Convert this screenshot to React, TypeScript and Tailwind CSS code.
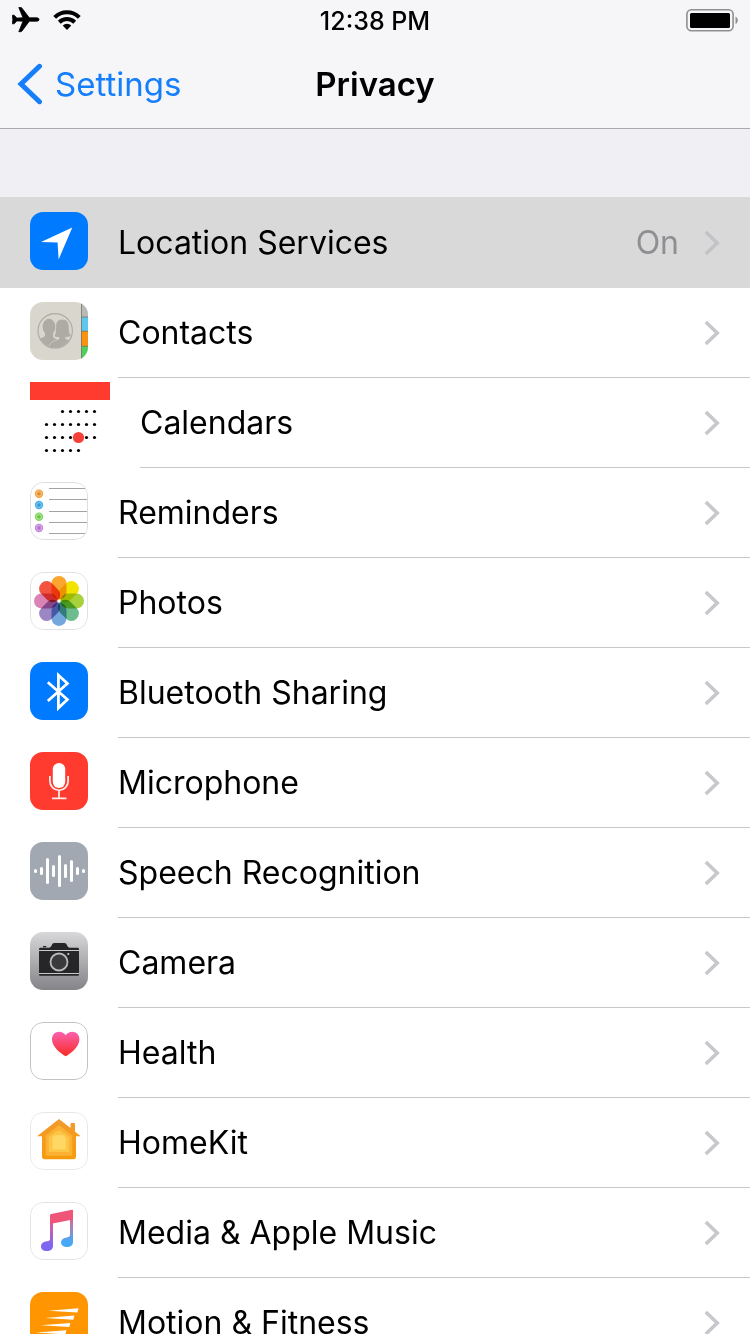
import type { ReactNode } from "react";

type Row = {
  label: string;
  icon: ReactNode;
  value?: string;
  selected?: boolean;
};

function Tile({ className, children }: { className: string; children: ReactNode }) {
  return (
    <span className={`block size-[58px] shrink-0 overflow-hidden rounded-[13px] ${className}`}>
      <svg viewBox="0 0 58 58" className="block size-[58px]" aria-hidden="true">
        {children}
      </svg>
    </span>
  );
}

function OutlinedTile({ stroke, children }: { stroke: string; children: ReactNode }) {
  return (
    <Tile className="bg-white">
      {children}
      <rect x="0.5" y="0.5" width="57" height="57" rx="12.5" fill="none" stroke={stroke} />
    </Tile>
  );
}

function LocationIcon() {
  return (
    <Tile className="bg-[#007aff]">
      <path d="M42.3 15.5 11 30l16.6.6L28.6 47.5Z" fill="#fff" />
    </Tile>
  );
}

function ContactsIcon() {
  return (
    <Tile className="bg-[#d9d7cd]">
      <rect x="51" y="0" width="7" height="15" fill="#b9b9b7" />
      <rect x="51" y="15" width="7" height="14" fill="#5fc6ee" />
      <rect x="51" y="29" width="7" height="15" fill="#f9930f" />
      <rect x="51" y="44" width="7" height="14" fill="#4fd05c" />
      <path d="M51.5 0v58M51 15h7M51 29.2h7M51 44.3h7" stroke="#77756c" strokeWidth="0.8" />
      <clipPath id="contacts-ring">
        <circle cx="25.2" cy="28.8" r="16.6" />
      </clipPath>
      <g clipPath="url(#contacts-ring)" fill="#aeaaa4">
        <ellipse cx="19" cy="24.8" rx="6.4" ry="8" />
        <path d="M15 28h8v7c1 1.600 4 2 5 3.500V48H4v-9c2-2.600 9-2.500 11-5Z" />
        <path
          d="M32.300 17.200c4.600 0 6.700 3 6.700 7.600 0 4 .4 6.400 2.200 9-1.800 1.400-3.800 1.600-5.600 1.500v1.200c2 1.600 5 1.400 7.400 4.100V49H18.300c.2-6 2.200-8.500 6-10.200 2.200-1 4-1.100 4.700-2.100v-1.200c-1.600.1-3.200-.1-4.800-1.400 1.400-2.600 1.500-5 1.500-9.300 0-4.600 2-7.600 6.600-7.600Z"
          stroke="#d9d7cd"
          strokeWidth="0.7"
        />
      </g>
      <circle cx="25.2" cy="28.8" r="17.2" fill="none" stroke="#aeaaa4" strokeWidth="1.2" />
    </Tile>
  );
}

const calendarDots: [number, number[]][] = [
  [30, [2, 3, 4, 5, 6]],
  [43, [0, 1, 2, 3, 4, 5, 6]],
  [56, [0, 1, 2, 3, 5, 6]],
  [69, [0, 1, 2, 3, 4]],
];

function CalendarIcon() {
  return (
    <svg viewBox="0 0 80 80" className="block size-[80px] shrink-0" aria-hidden="true">
      <rect x="0" y="1" width="80" height="18" fill="#ff3b30" />
      {calendarDots.map(([y, columns]) =>
        columns.map((c) => <circle key={`${y}-${c}`} cx={16.5 + c * 8} cy={y + 0.5} r="1.6" fill="#000" />),
      )}
      <circle cx="48.5" cy="56.5" r="5.6" fill="#f5403a" />
    </svg>
  );
}

function RemindersIcon() {
  const bullets = [
    { y: 11.7, color: "#f5a243" },
    { y: 23, color: "#46aeea" },
    { y: 34.7, color: "#82d85f" },
    { y: 46, color: "#c786e0" },
  ];
  return (
    <OutlinedTile stroke="#dededf">
      <path d="M19 6.5h37M19 17.5h39M19 29.5h39M19 40.5h39M19 51.5h37" stroke="#a3a3a3" />
      {bullets.map((b) => (
        <g key={b.y}>
          <circle cx="9" cy={b.y} r="4.2" fill={b.color} />
          <circle cx="9" cy={b.y} r="2.6" fill="none" stroke="#fff" strokeOpacity="0.35" strokeWidth="0.8" />
          <circle cx="9" cy={b.y} r="1.5" fill="#000" fillOpacity="0.12" />
        </g>
      ))}
    </OutlinedTile>
  );
}

function PhotosIcon() {
  const petals = ["#faa52e", "#f3e300", "#a9d13b", "#6cbc8e", "#74a8dc", "#9c86c4", "#d984b4", "#f2543f"];
  return (
    <OutlinedTile stroke="#e2e2e3">
      <g className="isolate">
        {petals.map((color, i) => (
          <rect
            key={color}
            x="21.5"
            y="4"
            width="15"
            height="23.5"
            rx="7.4"
            fill={color}
            transform={`rotate(${i * 45} 29 29)`}
            className="mix-blend-multiply"
          />
        ))}
      </g>
    </OutlinedTile>
  );
}

function BluetoothIcon() {
  return (
    <Tile className="bg-[#007aff]">
      <path
        d="M17.8 20.2 37.4 37.5 28.4 46V13.2L37.4 21.5 17.8 39"
        fill="none"
        stroke="#fff"
        strokeWidth="2.8"
      />
    </Tile>
  );
}

function MicrophoneIcon() {
  return (
    <Tile className="bg-[#ff3b30]">
      <rect x="22.8" y="11" width="12.4" height="25" rx="6.2" fill="#fff" />
      <path
        d="M19.9 24v5.2a9.1 9.1 0 0 0 18.2 0V24M29 38.3V46M22 46.3h14.5"
        fill="none"
        stroke="#ffe9e6"
        strokeWidth="1.8"
      />
    </Tile>
  );
}

function SpeechIcon() {
  const heights = [4, 8, 26, 12, 32, 14, 22, 8, 4];
  return (
    <Tile className="bg-[#a1a8b2]">
      {heights.map((h, i) => (
        <rect key={i} x={4 + i * 6} y={29 - h / 2} width="3" height={h} rx="1.5" fill="#fff" />
      ))}
    </Tile>
  );
}

function CameraIcon() {
  return (
    <Tile className="bg-linear-to-b from-[#d8d8da] to-[#858589]">
      <path
        d="M13 15.300V14h3.300v1.300ZM9 17.300c0-1 .5-1.600 1.500-1.600h8.200c1.800 0 2.300-1 3-2.400.6-1.600 1.200-2.300 2.800-2.300h9.700c1.600 0 2.200.8 2.800 2.300.7 1.500 1.300 2.400 3 2.400h7.500c1 0 1.500.6 1.500 1.600v25c0 1-.5 1.500-1.500 1.500h-37c-1 0-1.500-.5-1.500-1.500Z"
        fill="#262628"
      />
      <path d="M9 18.500h40M9 41.500h40" stroke="#c9c9cb" strokeWidth="1" />
      <circle cx="29" cy="30" r="8.5" fill="#3a3a3c" stroke="#b9b9bc" strokeWidth="1.8" />
      <circle cx="38.3" cy="22" r="1.1" fill="#d0d0d2" />
    </Tile>
  );
}

function HealthIcon() {
  return (
    <OutlinedTile stroke="#c3c3c6">
      <linearGradient id="heart-fill" x1="0" y1="0" x2="0" y2="1">
        <stop offset="0" stopColor="#fb62b0" />
        <stop offset="1" stopColor="#f82a22" />
      </linearGradient>
      <path
        d="M35.700 34.300C31.500 31.800 22 25.500 22 17.300c0-4.400 3-7.500 7.100-7.500 2.800 0 5.200 1.400 6.600 3.500 1.400-2.100 3.800-3.500 6.600-3.500 4.100 0 7.100 3.100 7.100 7.500 0 8.200-9.500 14.500-13.700 17Z"
        fill="url(#heart-fill)"
      />
    </OutlinedTile>
  );
}

function HomeIcon() {
  return (
    <OutlinedTile stroke="#e8e8e9">
      <linearGradient id="house-fill" x1="0" y1="0" x2="0" y2="1">
        <stop offset="0" stopColor="#f29a2c" />
        <stop offset="1" stopColor="#f79b0c" />
      </linearGradient>
      <path
        d="M29 7 40.500 16v-4q0-1 1-1H44q1 0 1 1v7.700l5.700 4.600H46V44.500q0 2.800-2.800 2.800H14.800Q12 47.300 12 44.500V24.300H7Z"
        fill="url(#house-fill)"
      />
      <path d="M29 13 42.300 23.800V42q0 1.800-1.800 1.800h-23Q15.700 43.800 15.700 42V23.800Z" fill="#fbb234" />
      <path d="M29 18 39.200 24.500V40H18.800V24.500Z" fill="#fdc545" />
      <path d="M25.500 23h7l3.200 2.500V37.500H22.500V25.500Z" fill="#fed765" />
    </OutlinedTile>
  );
}

function MusicIcon() {
  return (
    <OutlinedTile stroke="#e4e4e6">
      <linearGradient id="note-left" x1="0" y1="8" x2="0" y2="49" gradientUnits="userSpaceOnUse">
        <stop offset="0.15" stopColor="#f5566f" />
        <stop offset="0.45" stopColor="#c95fae" />
        <stop offset="0.85" stopColor="#7f66f2" />
      </linearGradient>
      <linearGradient id="note-right" x1="0" y1="8" x2="0" y2="45" gradientUnits="userSpaceOnUse">
        <stop offset="0.15" stopColor="#ee5875" />
        <stop offset="0.5" stopColor="#a383c4" />
        <stop offset="0.85" stopColor="#46a9f7" />
      </linearGradient>
      <path
        d="M20 18h3v26c0 3-2.400 5-6.200 5C13.500 49 11 47.300 11 44.400c0-3.200 2.600-4.700 5.800-5.200 2.200-.3 3.200-.7 3.200-2.200Z"
        fill="url(#note-left)"
      />
      <path
        d="M40 14h3v26.200c0 3-2.400 4.800-6 4.800-3.400 0-5.900-1.600-5.900-4.500 0-3.200 2.600-4.600 5.700-5.100 2.200-.3 3.200-.8 3.200-2.300Z"
        fill="url(#note-right)"
      />
      <path d="M20 13.500q0-1.200 1.200-1.500L42 7.700q1-.2 1 .8V17.500L20 22Z" fill="#ef5578" />
    </OutlinedTile>
  );
}

function MotionIcon() {
  return (
    <Tile className="bg-[#ff9500]">
      <path
        d="M18.300 18.700 48.500 16.300 47.400 20.500ZM15 26 44.400 23.600 43.300 27.800ZM10.700 33.300 40.400 30.900 39.300 35.100ZM6 40.600 36.400 38.200 35.300 42.400Z"
        fill="#fff"
      />
    </Tile>
  );
}

const rows: Row[] = [
  { label: "Location Services", icon: <LocationIcon />, value: "On", selected: true },
  { label: "Contacts", icon: <ContactsIcon /> },
  { label: "Calendars", icon: <CalendarIcon /> },
  { label: "Reminders", icon: <RemindersIcon /> },
  { label: "Photos", icon: <PhotosIcon /> },
  { label: "Bluetooth Sharing", icon: <BluetoothIcon /> },
  { label: "Microphone", icon: <MicrophoneIcon /> },
  { label: "Speech Recognition", icon: <SpeechIcon /> },
  { label: "Camera", icon: <CameraIcon /> },
  { label: "Health", icon: <HealthIcon /> },
  { label: "HomeKit", icon: <HomeIcon /> },
  { label: "Media & Apple Music", icon: <MusicIcon /> },
  { label: "Motion & Fitness", icon: <MotionIcon /> },
];

function StatusBar() {
  return (
    <div className="grid h-10 grid-cols-[1fr_auto_1fr] items-center px-3">
      <div className="flex items-center gap-[13px]">
        <svg viewBox="0 0 28 26" className="h-[26px] w-7" aria-label="Airplane mode">
          <path
            d="M24.800 10.800c1.500 0 2.200.8 2.200 1.700s-.7 1.700-2.200 1.700h-7.500L10 24q-.5.700-1.200.7H6.800l4.200-10.500-6.200-.3L2.200 16.800H.4L.8 12.500.4 8.200h1.800L4.800 11.100l6.200-.3L6.800.5h2q.7 0 1.200.7l7.300 9.600Z"
            stroke="#000"
            strokeWidth="0.8"
            strokeLinejoin="round"
          />
        </svg>
        <svg viewBox="0 0 28 20" className="h-5 w-7" aria-label="Wi-Fi">
          <path
            d="M1.700 7.300a17.500 17.500 0 0 1 24.600 0M6.300 12.200a11 11 0 0 1 15.400 0"
            fill="none"
            stroke="#000"
            strokeWidth="4"
          />
          <path d="m14 19.900-4.300-4.400a6 6 0 0 1 8.600 0Z" />
        </svg>
      </div>
      <div className="pt-0.5 text-[25px] leading-7 font-medium">12:38 PM</div>
      <svg viewBox="0 0 54 24" className="h-6 w-[54px] justify-self-end" aria-label="Battery full">
        <rect x="2.9" y="1.8" width="46.2" height="21" rx="4.5" fill="none" stroke="#8f8f92" strokeWidth="1.6" />
        <rect x="6" y="5" width="40" height="15" rx="1.5" />
        <path d="M51.500 8.500q2.300 1 2.300 3.800t-2.300 3.800Z" fill="#8f8f92" />
      </svg>
    </div>
  );
}

function SettingsRow({ row }: { row: Row }) {
  return (
    <li className={row.selected ? "border-t border-[#d9d9d9] bg-[#d9d9d9]" : "bg-white"}>
      <a href="#" className="flex h-[90px] gap-[30px] pl-[30px]">
        <span className="flex items-center pb-1">{row.icon}</span>
        <span
          className={`flex min-w-0 flex-1 items-center border-b pr-[30px] ${
            row.selected ? "border-[#d9d9d9]" : "border-[#c8c7cc]"
          }`}
        >
          <span className="flex-1">{row.label}</span>
          {row.value && <span className="mr-[25px] text-[#8e8e93]">{row.value}</span>}
          <svg viewBox="0 0 16 26" className="h-[26px] w-4 shrink-0" aria-hidden="true">
            <path
              d="M1.800 2 13.200 13 1.800 24"
              fill="none"
              stroke={row.selected ? "#c3c3c7" : "#c7c7cc"}
              strokeWidth="3.6"
            />
          </svg>
        </span>
      </a>
    </li>
  );
}

export default function App() {
  return (
    <div className="flex h-screen flex-col overflow-hidden bg-[#efeff4] font-[Inter,'Liberation_Sans',sans-serif] text-[32px] leading-10 text-black">
      <header className="shrink-0 border-b border-[#a9a9ae] bg-[#f6f6f9]">
        <StatusBar />
        <nav className="grid h-[88px] grid-cols-[1fr_auto_1fr] items-center px-[17px] text-[33px]">
          <a href="#" className="flex items-center gap-3 text-[#147efb]">
            <svg viewBox="0 0 26 42" className="h-[42px] w-[26px]" aria-hidden="true">
              <path d="M22.500 3.300 4 21l18.500 17.700" fill="none" stroke="currentColor" strokeWidth="5" strokeLinecap="round" />
            </svg>
            Settings
          </a>
          <h1 className="font-semibold">Privacy</h1>
        </nav>
      </header>
      <main className="min-h-0 flex-1 overflow-y-auto pt-[68px] [scrollbar-width:none]">
        <ul>
          {rows.map((row) => (
            <SettingsRow key={row.label} row={row} />
          ))}
        </ul>
      </main>
    </div>
  );
}
